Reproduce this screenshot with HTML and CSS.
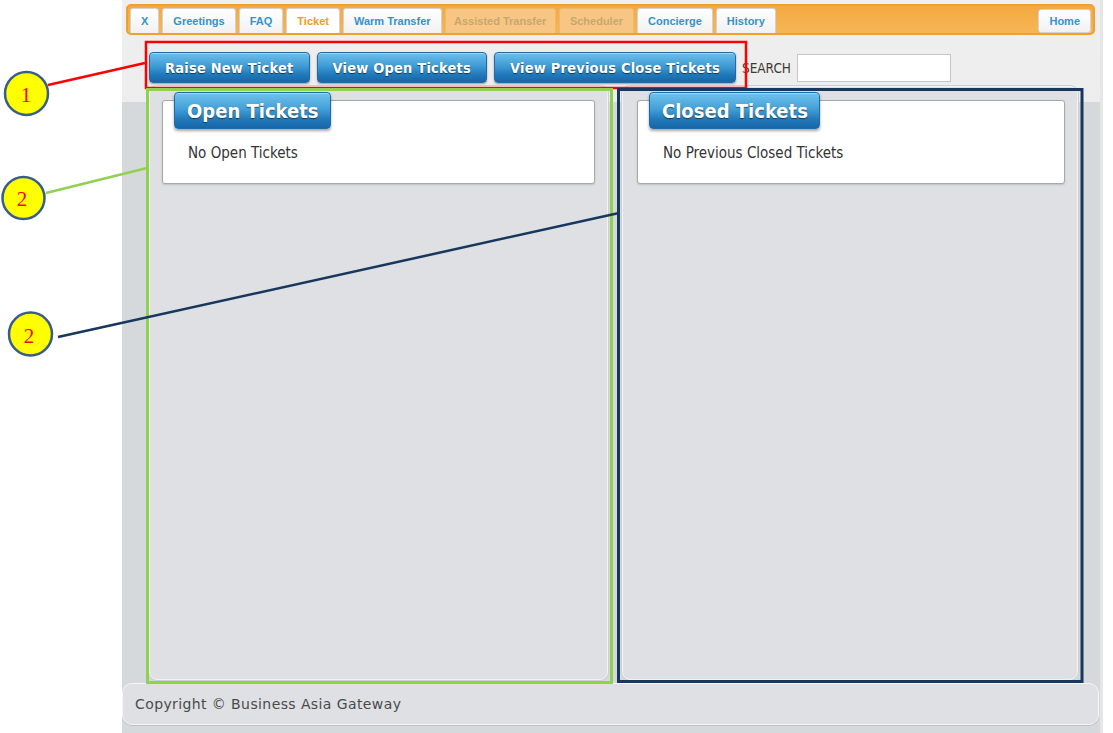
FILE: index.html
```html
<!DOCTYPE html>
<html lang="en">
<head>
<meta charset="utf-8">
<title>Tickets</title>
<link rel="stylesheet" href="styles.css">
</head>
<body>
<div class="page">
  <div class="gutter"></div>
  <div class="app">
    <nav class="tabbar">
      <div class="tabs">
        <a class="tab">X</a>
        <a class="tab">Greetings</a>
        <a class="tab">FAQ</a>
        <a class="tab active">Ticket</a>
        <a class="tab">Warm Transfer</a>
        <a class="tab disabled narrow">Assisted Transfer</a>
        <a class="tab disabled">Scheduler</a>
        <a class="tab">Concierge</a>
        <a class="tab">History</a>
      </div>
      <a class="tab home">Home</a>
    </nav>

    <div class="toolbar">
      <button class="btn">Raise New Ticket</button>
      <button class="btn">View Open Tickets</button>
      <button class="btn">View Previous Close Tickets</button>
      <label class="search-label">SEARCH</label>
      <input class="search-input" type="text">
    </div>

    <div class="panels">
      <section class="panel panel-left">
        <div class="box">
          <h2 class="box-title">Open Tickets</h2>
          <p class="box-text">No Open Tickets</p>
        </div>
      </section>
      <section class="panel panel-right">
        <div class="box">
          <h2 class="box-title">Closed Tickets</h2>
          <p class="box-text">No Previous Closed Tickets</p>
        </div>
      </section>
    </div>

    <footer class="footer">Copyright © Business Asia Gateway</footer>
  </div>

  <svg class="annotations" width="1113" height="733" viewBox="0 0 1113 733">
    <rect x="146" y="42" width="600" height="46" fill="none" stroke="#ff0000" stroke-width="2.5"/>
    <rect x="147.5" y="89.5" width="464" height="593" fill="none" stroke="#92d050" stroke-width="3"/>
    <rect x="618.5" y="89.5" width="463.5" height="592" fill="none" stroke="#17375e" stroke-width="3"/>
    <line x1="48" y1="85" x2="145" y2="63" stroke="#ff0000" stroke-width="2.5"/>
    <line x1="46" y1="193" x2="147" y2="168" stroke="#92d050" stroke-width="2.5"/>
    <line x1="58" y1="337" x2="619" y2="213" stroke="#17375e" stroke-width="2.5"/>
    <circle cx="26.5" cy="93.5" r="21.5" fill="#ffff00" stroke="#385d8a" stroke-width="2.5"/>
    <circle cx="23.5" cy="198" r="21" fill="#ffff00" stroke="#385d8a" stroke-width="2.5"/>
    <circle cx="30.5" cy="334" r="21.5" fill="#ffff00" stroke="#385d8a" stroke-width="2.5"/>
    <text class="callout-num" x="26" y="102">1</text>
    <text class="callout-num" x="22" y="206">2</text>
    <text class="callout-num" x="29" y="343">2</text>
  </svg>
</div>
</body>
</html>
```

FILE: styles.css
```css
html, body {
  margin: 0;
  padding: 0;
  background: #ffffff;
}

body {
  width: 1113px;
  height: 733px;
  overflow: hidden;
}

.page {
  position: relative;
  display: flex;
  width: 1113px;
  height: 733px;
}

.gutter {
  flex: none;
  width: 122px;
}

.app {
  flex: none;
  width: 981px;
  height: 733px;
  box-sizing: border-box;
  padding-top: 4px;
  display: flex;
  flex-direction: column;
  background: linear-gradient(to bottom, #efefef 0, #ededed 102px, #d6d9dc 102px, #d6d9dc 100%);
  border-right: 3px solid #e6e6e6;
}

/* ---------- Tab bar ---------- */
.tabbar {
  height: 31px;
  margin: 0 5px 0 4px;
  box-sizing: border-box;
  border: 2px solid #f0a02c;
  border-radius: 5px;
  background: linear-gradient(to bottom, #f4a941, #f6b655);
  display: flex;
  align-items: flex-end;
  justify-content: space-between;
  padding: 0 2px 0 2px;
}

.tabs {
  display: flex;
  align-items: flex-end;
  gap: 3px;
}

.tab {
  display: block;
  height: 25px;
  box-sizing: border-box;
  padding: 0 10px;
  line-height: 24px;
  border: 1px solid #d2d2d2;
  border-bottom: none;
  border-radius: 3px 3px 0 0;
  background: linear-gradient(to bottom, #ffffff, #f1f1f1);
  color: #3392cf;
  font-family: "Liberation Sans", Arial, sans-serif;
  font-weight: 700;
  font-size: 11px;
  white-space: nowrap;
}

.tab.active {
  color: #f39a22;
  background: #ffffff;
}

.tab.disabled {
  background: #f7c684;
  border-color: #f0b767;
  color: #c9a66e;
}

.tab.narrow {
  padding: 0 8.5px;
}

.tab.home {
  height: 24px;
  border-bottom: 1px solid #d2d2d2;
  border-radius: 3px;
  line-height: 22px;
}

/* ---------- Toolbar ---------- */
.toolbar {
  display: flex;
  align-items: center;
  gap: 7px;
  height: 31px;
  margin-top: 17px;
  padding-left: 27px;
}

.btn {
  height: 31px;
  box-sizing: border-box;
  padding: 0 15px;
  border: 1px solid #1f6ca7;
  border-radius: 4px;
  background: linear-gradient(to bottom, #6cc0ea 0%, #3f9bd5 45%, #2079b9 75%, #1766a8 100%);
  box-shadow: 0 1px 2px rgba(0, 0, 0, 0.35), inset 0 1px 0 rgba(255, 255, 255, 0.35);
  color: #ffffff;
  font-family: "DejaVu Sans Condensed", "DejaVu Sans", sans-serif;
  font-stretch: condensed;
  font-weight: 700;
  font-size: 14.5px;
  letter-spacing: 0.2px;
  text-shadow: 0 1px 1px rgba(0, 0, 0, 0.55);
  white-space: nowrap;
}

.search-label {
  margin-left: -1px;
  color: #3f3a36;
  font-family: "DejaVu Sans Condensed", "DejaVu Sans", sans-serif;
  font-stretch: condensed;
  font-size: 13.5px;
}

.search-input {
  width: 154px;
  height: 28px;
  box-sizing: border-box;
  margin: 0 0 0 -1px;
  border: 1px solid #c6c6c6;
  background: #ffffff;
}

/* ---------- Panels ---------- */
.panels {
  display: flex;
  gap: 14px;
  height: 594px;
  margin-top: 3px;
  padding-left: 27px;
}

.panel {
  box-sizing: border-box;
  height: 594px;
  background: #dfe0e3;
  border: 1px solid #f3f3f5;
  border-radius: 8px;
  box-shadow: 0 0 0 1px #cdd0d3;
}

.panel-left {
  width: 459px;
}

.panel-right {
  width: 456px;
}

.panel-right .box {
  margin-left: 14px;
}

.box {
  height: 84px;
  box-sizing: border-box;
  margin: 13px 12px 0 12px;
  background: #ffffff;
  border: 1px solid #a8a8a8;
  border-radius: 3px;
  box-shadow: 0 1px 2px rgba(0, 0, 0, 0.15);
}

.box-title {
  display: inline-block;
  height: 37px;
  box-sizing: border-box;
  margin: -9px 0 0 11px;
  padding: 0 11px 0 12px;
  line-height: 36px;
  border: 1px solid #1f6ca7;
  border-radius: 4px;
  background: linear-gradient(to bottom, #70c3ec 0%, #43a0d8 45%, #2179ba 75%, #1666a8 100%);
  box-shadow: 0 2px 3px rgba(0, 0, 0, 0.35), inset 0 1px 0 rgba(255, 255, 255, 0.35);
  color: #ffffff;
  font-family: "DejaVu Sans Condensed", "DejaVu Sans", sans-serif;
  font-stretch: condensed;
  font-weight: 700;
  font-size: 20px;
  text-shadow: 0 1px 1px rgba(0, 0, 0, 0.5);
}

.box-text {
  margin: 15px 0 0 25px;
  color: #333333;
  font-family: "DejaVu Sans Condensed", "DejaVu Sans", sans-serif;
  font-stretch: condensed;
  font-size: 15px;
  line-height: 18px;
}

/* ---------- Footer ---------- */
.footer {
  height: 42px;
  box-sizing: border-box;
  margin: 3px 1px 0 0;
  padding-left: 12px;
  display: flex;
  align-items: center;
  background: #dfe0e3;
  border: 1px solid #f6f6f7;
  border-radius: 10px;
  box-shadow: 0 1px 0 #bcc0c4;
  color: #4a4a4a;
  font-family: "DejaVu Sans", Verdana, sans-serif;
  font-size: 14px;
  letter-spacing: 0.4px;
}

/* ---------- Annotation overlay ---------- */
.annotations {
  position: absolute;
  left: 0;
  top: 0;
  pointer-events: none;
}

.callout-num {
  fill: #ff0000;
  font-family: "Liberation Serif", "Times New Roman", serif;
  font-size: 21px;
  text-anchor: middle;
}
```
